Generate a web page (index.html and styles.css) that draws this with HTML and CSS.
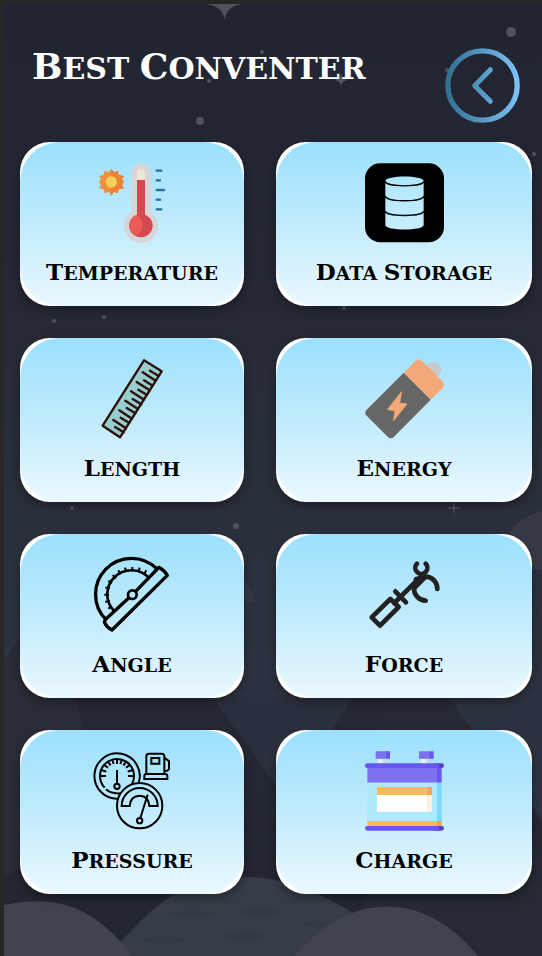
FILE: index.html
```html
<!DOCTYPE html>
<html lang="en">
<head>
<meta charset="utf-8">
<meta name="viewport" content="width=device-width, initial-scale=1">
<title>Best Conventer</title>
<link rel="stylesheet" href="styles.css">
</head>
<body>
<div class="page">
  <svg class="scene" viewBox="4 4 538 952" preserveAspectRatio="xMidYMid slice" aria-hidden="true">
    <defs>
      <linearGradient id="sky" x1="0" y1="0" x2="0" y2="1">
        <stop offset="0" stop-color="#212431"/>
        <stop offset=".25" stop-color="#242834"/>
        <stop offset=".6" stop-color="#2b313e"/>
        <stop offset="1" stop-color="#2e3443"/>
      </linearGradient>
      <linearGradient id="peak" x1="0" y1="0" x2="0" y2="1">
        <stop offset="0" stop-color="#272a34"/>
        <stop offset="1" stop-color="#232530"/>
      </linearGradient>
    </defs>
    <rect x="4" y="4" width="538" height="952" fill="url(#sky)"/>
    <path fill="#373a46" d="M496 570Q502 522 542 511V570Z"/>
    <path fill="#343844" d="M230 602V578Q251 576 254 602Z"/>
    <path fill="url(#peak)" d="M4 662L50 590H140L276 785L352 698L400 640L500 765L542 820V956H4Z"/>
    <path fill="#2b303e" d="M213 698H353L332 730L276 785Z"/>
    <path fill="#292d38" d="M4 662L50 600L75 698L100 800L4 880Z"/>
    <path fill="#272a34" d="M380 698H450L500 780L542 860V956H360Z"/>
    <path fill="#363d47" d="M104 956C145 925 160 877 250 877C320 880 350 920 440 956Z"/>
    <path fill="#333a44" d="M168 914q24-7 48 0q-24 7-48 0M238 912q24-7 48 0q-24 7-48 0M220 936q24-6 48 0q-24 7-48 0M140 940q24-6 48 0q-24 7-48 0M300 924q24-6 48 0q-24 7-48 0"/>
    <path fill="#41444f" d="M4 905C50 895 92 902 132 956H4ZM294 956C350 890 425 890 478 956Z"/>
    <g fill="#50525e">
      <path d="M207 4H242Q226 6 225 20Q222 6 207 4Z"/>
      <circle cx="511" cy="32" r="5"/><circle cx="200" cy="121" r="4"/>
      <circle cx="262" cy="52" r="2"/><circle cx="209" cy="81" r="2"/>
      <circle cx="447" cy="70" r="2"/><circle cx="475" cy="121" r="2"/>
      <circle cx="534" cy="154" r="2"/><circle cx="344" cy="308" r="2"/>
      <circle cx="54" cy="321" r="2"/><circle cx="104" cy="317" r="2"/>
      <circle cx="72" cy="508" r="2"/><circle cx="236" cy="526" r="3"/>
      <path d="M341 72Q341 80 349 80Q341 80 341 88Q341 80 333 80Q341 80 341 72ZM454 500L455 507L462 508L455 509L454 516L453 509L446 508L453 507Z"/>
    </g>
  </svg>

  <header class="header">
    <h1 class="title"><span class="word">Best</span> <span class="word">Conventer</span></h1>
    <button class="back" type="button" aria-label="Back">
      <svg viewBox="522 144 225 225" fill="none" stroke="url(#ring)" aria-hidden="true">
        <defs>
          <linearGradient id="ring" gradientUnits="userSpaceOnUse" x1="522" y1="0" x2="747" y2="0">
            <stop offset="0" stop-color="#2f6e8c"/>
            <stop offset="1" stop-color="#7fc4fb"/>
          </linearGradient>
        </defs>
        <circle cx="634.500" cy="256.500" r="104" stroke-width="16"/>
        <path d="M658 209L611 257L658 304" stroke-width="15" stroke-linecap="round" stroke-linejoin="round"/>
      </svg>
    </button>
  </header>

  <main class="grid">
    <a class="card" href="#temperature"><span class="face">
      <svg class="icon" viewBox="246 84 240 240" aria-hidden="true">
        <path fill="#f0903f" d="M304 101L312 112L323 107L326 120L342 123L336 133L342 141L336 150L342 160L326 163L323 175L312 170L304 182L296 170L284 175L281 163L267 160L273 150L266 141L273 133L267 123L281 120L284 107L296 112Z"/>
        <path fill="#ee8138" d="M304 101L312 112L323 107L326 120L342 123L336 133L342 141L336 150L342 160L326 163L323 175L312 170L304 182L300 165A34 34 0 0 0 300 116Z"/>
        <circle cx="304" cy="141" r="17" fill="#f6d05a"/>
        <path fill="#d6d6d8" d="M364 114A29 29 0 0 1 422 114V231A51 51 0 1 1 364 231Z"/>
        <path fill="#f0e6d8" d="M381 113A12 12 0 0 1 405 113V137H381Z"/>
        <path fill="#d4484f" d="M381 135H405V239A35 35 0 1 1 381 239Z"/>
        <path fill="#ea5a57" d="M381 239A35 35 0 0 0 376 303Q398 292 398 270Q398 250 381 239Z"/>
        <path stroke="#296d9d" stroke-width="7" stroke-linecap="round" d="M440 107H454M440 136H450M440 165H462M440 194H450M440 223H454"/>
      </svg>
      <span class="label"><span class="word">Temperature</span></span>
    </span></a>

    <a class="card" href="#data-storage"><span class="face">
      <svg class="icon" viewBox="282 84 240 240" aria-hidden="true">
        <defs><linearGradient id="disk" x1="0" y1="0" x2="0" y2="1"><stop offset="0" stop-color="#ade7fc"/><stop offset="1" stop-color="#c8eefc"/></linearGradient></defs>
        <rect x="285" y="85" width="237" height="237" rx="46"/>
        <path fill="url(#disk)" d="M346 138C346 120 461 120 461 138V270C461 288 346 288 346 270Z"/>
        <path fill="none" stroke="#000" stroke-width="4" d="M346 139C346 157 461 157 461 139M346 183C346 202 461 202 461 183M346 228C346 246 461 246 461 228"/>
      </svg>
      <span class="label"><span class="word">Data</span> <span class="word">Storage</span></span>
    </span></a>

    <a class="card" href="#length"><span class="face">
      <svg class="icon" viewBox="246 72 240 240" aria-hidden="true" stroke="#2c1009" stroke-width="7" stroke-linejoin="round" stroke-linecap="round">
        <path fill="#98cdcf" d="M402 76L455 109L330 307L278 272Z"/>
        <path fill="none" d="M398 112l39 25M380 141l39 25M363 169l39 25M346 197l38 25M328 226l38 25M310 255l38 25M420 107l26 16M402 136l26 16M385 164l26 16M368 192l26 16M350 219l26 16M332 248l26 16M315 276l26 16"/>
      </svg>
      <span class="label"><span class="word">Length</span></span>
    </span></a>

    <a class="card" href="#energy"><span class="face">
      <svg class="icon" viewBox="282 72 240 240" aria-hidden="true">
        <path fill="#c9c9cb" d="M468 94L477 85Q490 76 502 85L511 95Q519 104 511 116L502 127Z"/>
        <path fill="#f3a977" d="M401 113L436 78Q446 68 456 78L517 139Q527 150 517 160L482 194Z"/>
        <path fill="#666" d="M401 113L290 224Q281 233 290 242L353 305Q362 315 372 305L482 194Z"/>
        <path fill="#f3a977" stroke="#f3a977" stroke-width="2" stroke-linejoin="round" d="M394 170L352 224L375 227L370 258L411 207L389 204L395 172Z"/>
      </svg>
      <span class="label"><span class="word">Energy</span></span>
    </span></a>

    <a class="card" href="#angle"><span class="face">
      <svg class="icon" viewBox="246 75 240 240" aria-hidden="true" fill="none" stroke="#000" stroke-width="10" stroke-linejoin="round">
        <path d="M440 116A106 106 0 1 0 289 270"/>
        <path d="M417 144A70 70 0 1 0 311 242" stroke-width="8"/>
        <path d="M377 184L439 120L446 112Q462 120 472 136L306 300Q290 292 283 276L287 268L357 203"/>
        <circle cx="367" cy="194" r="13" stroke-width="8"/>
        <path stroke-width="6" d="M402 133L409 121M385 126L389 113M367 124V111M349 126L345 113M332 133L325 121M318 145L308 135M306 159L295 153M299 176L286 172M297 194H283M299 212L286 216M306 229L295 236"/>
      </svg>
      <span class="label"><span class="word">Angle</span></span>
    </span></a>

    <a class="card" href="#force"><span class="face">
      <svg class="icon" viewBox="282 75 240 240" aria-hidden="true" fill="none" stroke="#222021" stroke-width="14" stroke-linejoin="round" stroke-linecap="round">
        <path d="M305 262L361 207L386 231L330 287Z"/>
        <path d="M373 219L453 139M376 184L408 217"/>
        <path d="M441 152L440 149" stroke-width="18"/>
        <path d="M441 101A18 18 0 1 0 467 101"/>
        <path d="M502 177A36 36 0 0 0 467 140L432 175A36 36 0 0 0 467 212"/>
      </svg>
      <span class="label"><span class="word">Force</span></span>
    </span></a>

    <a class="card" href="#pressure"><span class="face">
      <svg class="icon" viewBox="246 75 240 240" aria-hidden="true" fill="none" stroke="#000" stroke-width="6">
        <path d="M324 218A68 68 0 1 1 386 171"/>
        <path d="M284 185A51 51 0 1 1 366 174M288 190Q304 204 330 202"/>
        <path d="M270 150H288M372 150H354M273 132L289 137M369 132L353 137M281 116L294 125M361 116L348 125M292 105L302 118M350 105L340 118M306 99L311 114M336 99L331 114M321 97V114"/>
        <path d="M321 132V173"/>
        <circle cx="321" cy="181" r="8"/>
        <circle cx="389" cy="239" r="68"/>
        <path d="M335 240A54 54 0 0 1 443 240H418Q416 210 389 209Q361 210 359 240Z"/>
        <path d="M413 206L391 276"/>
        <circle cx="389" cy="284" r="8"/>
        <path d="M409 143V91Q409 83 417 83H455Q463 83 463 91V143M424 96H448V113H424ZM403 159V151Q403 144 409 144H466Q472 144 472 151V159ZM464 95L477 106V128Q477 134 464 135"/>
      </svg>
      <span class="label"><span class="word">Pressure</span></span>
    </span></a>

    <a class="card" href="#charge"><span class="face">
      <svg class="icon" viewBox="282 75 240 240" aria-hidden="true">
        <path fill="#e2f4f7" d="M324 98H340V113H324ZM453 98H469V113H453Z"/>
        <path fill="#bcdde3" d="M339 98H352V113H339ZM469 98H484V113H469Z"/>
        <path fill="#7c72f1" d="M317 76H346V98H317ZM447 76H476V98H447ZM292 124H502V170H292Z"/>
        <path fill="#6857ec" d="M346 76H360V98H346ZM476 76H491V98H476ZM501 124H515V170H501Z"/>
        <path fill="#aee9fc" d="M292 170H501V286H292Z"/>
        <path fill="#7bdafc" d="M501 170H515V286H501Z"/>
        <path fill="#f6bd4f" d="M321 183H472V207H321ZM292 285H501V300H292Z"/>
        <path fill="#f3a34b" d="M472 183H486V207H472ZM501 285H515V300H501Z"/>
        <path fill="#fff" d="M321 207H472V257H321Z"/>
        <path fill="#fff1dc" d="M472 207H486V257H472Z"/>
        <rect fill="#5543bd" x="490" y="112" width="32" height="14" rx="7"/>
        <rect fill="#5543bd" x="490" y="300" width="32" height="14" rx="7"/>
        <path fill="#6857ec" d="M292 112H507V126H292A7 7 0 0 1 292 112ZM292 300H507V314H292A7 7 0 0 1 292 300Z"/>
      </svg>
      <span class="label"><span class="word">Charge</span></span>
    </span></a>
  </main>
</div>
</body>
</html>
```
FILE: styles.css
```css
* {
  box-sizing: border-box;
}

body {
  margin: 0;
  background: #262727;
  font-family: "DejaVu Serif", serif;
  font-weight: bold;
}

.page {
  position: relative;
  isolation: isolate;
  min-height: 100vh;
  padding: 44px 10px 62px 16px;
  border: solid #262727;
  border-width: 4px 0 0 4px;
  overflow: hidden;
}

.scene {
  position: absolute;
  inset: 0;
  z-index: -1;
  width: 100%;
  height: 100%;
}

.header {
  display: flex;
  align-items: flex-start;
  justify-content: space-between;
  padding: 0 12px 19px;
}

.title {
  margin: 0;
  color: #fff;
  font-size: 30px;
  line-height: 36px;
  white-space: nowrap;
}

.word {
  display: inline-block;
  text-transform: uppercase;
}

.title .word::first-letter {
  font-size: 36px;
}

.back {
  flex: none;
  width: 75px;
  padding: 0;
  border: 0;
  border-radius: 50%;
  background: none;
  cursor: pointer;
}

.back svg {
  display: block;
  width: 100%;
}

.grid {
  display: grid;
  grid-template-columns: 7fr 8fr;
  gap: 32px;
}

.card {
  border-radius: 30px;
  background: #fff;
  box-shadow: 0 4px 10px rgba(0, 0, 0, .35);
  color: #000;
  text-decoration: none;
}

.face {
  display: flex;
  flex-direction: column;
  align-items: center;
  gap: 14px;
  padding: 21px 8px 19px;
  border-radius: 40px;
  background: linear-gradient(#9be0fd, #c7edfc 58%, #ebf8ff);
}

.icon {
  width: 80px;
  height: 80px;
}

.label {
  height: 30px;
  font-size: 19px;
  line-height: 30px;
  white-space: nowrap;
}

.label .word::first-letter {
  font-size: 23px;
}
```
